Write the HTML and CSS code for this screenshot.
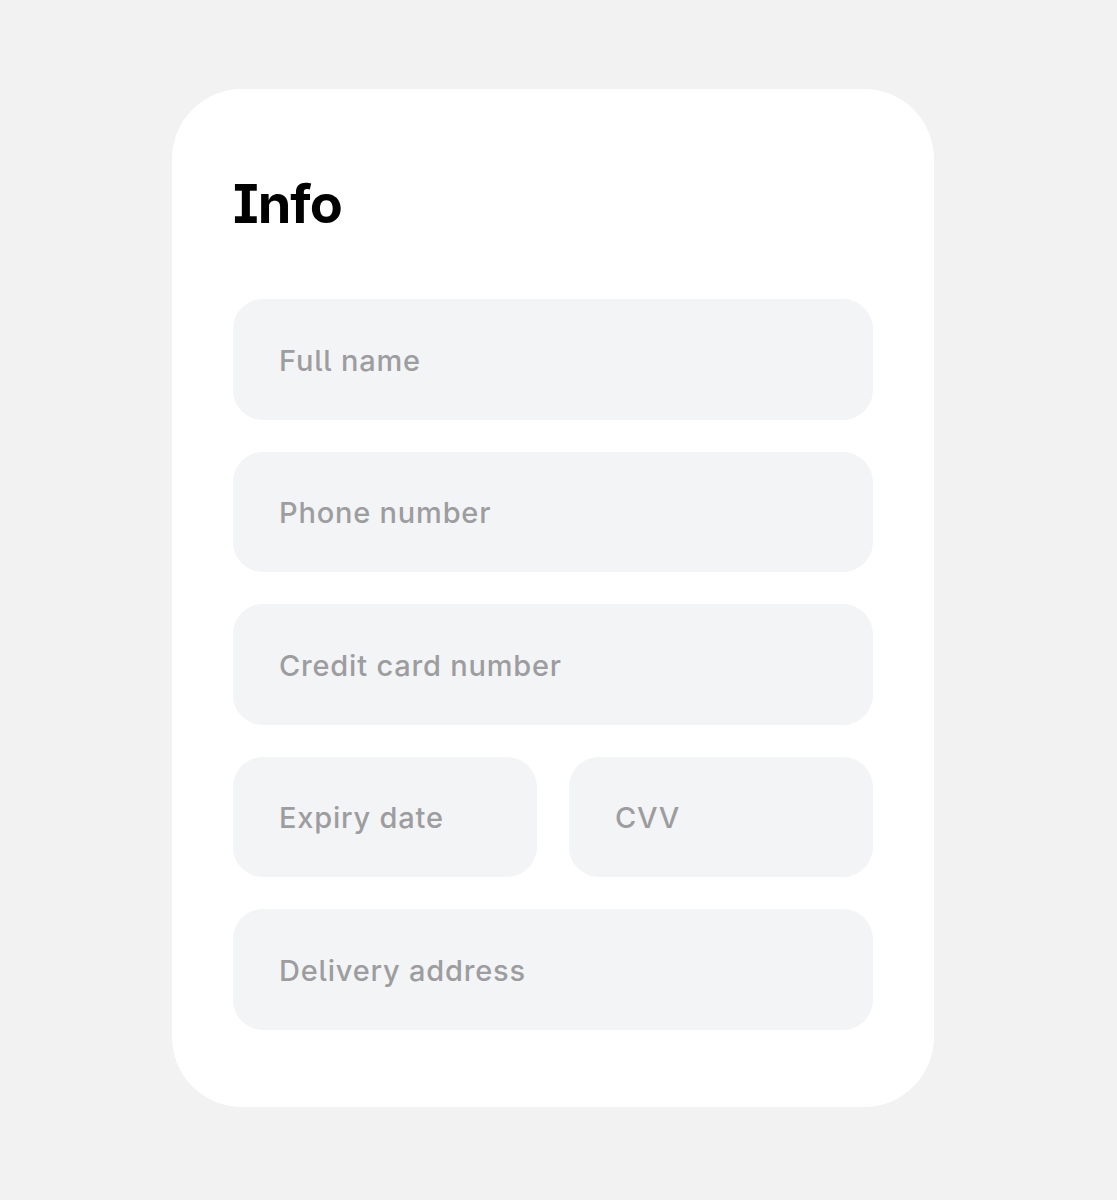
FILE: index.html
```html
<!DOCTYPE html>
<html lang="en">
<head>
<meta charset="utf-8">
<title>Info</title>
<link rel="stylesheet" href="styles.css">
</head>
<body>
<main class="card">
  <h1 class="title">Info</h1>
  <form class="form">
    <div class="field"><span class="placeholder">Full name</span></div>
    <div class="field"><span class="placeholder">Phone number</span></div>
    <div class="field"><span class="placeholder">Credit card number</span></div>
    <div class="row">
      <div class="field"><span class="placeholder">Expiry date</span></div>
      <div class="field"><span class="placeholder">CVV</span></div>
    </div>
    <div class="field"><span class="placeholder">Delivery address</span></div>
  </form>
</main>
</body>
</html>
```
FILE: styles.css
```css
html, body {
  margin: 0;
  padding: 0;
}
body {
  background: #f2f2f2;
  font-family: Inter, "Noto Sans", sans-serif;
  font-feature-settings: "cv05" 1, "cv08" 1;
  min-height: 1200px;
  padding-top: 89px;
  box-sizing: border-box;
}
.card {
  margin-left: 172px;
  width: 762px;
  box-sizing: border-box;
  background: #ffffff;
  border-radius: 70px;
  padding: 88px 61px 77px;
}
.title {
  margin: 0 0 68px;
  font-size: 54px;
  line-height: 1;
  font-weight: 700;
  color: #000;
  letter-spacing: -1px;
}
.form {
  display: flex;
  flex-direction: column;
  gap: 32px;
  margin: 0;
}
.row {
  display: grid;
  grid-template-columns: 1fr 1fr;
  gap: 32px;
}
.field {
  height: 120.5px;
  background: #f3f4f6;
  border-radius: 30px;
  display: flex;
  align-items: center;
  padding-left: 46px;
  padding-top: 2px;
  box-sizing: border-box;
}
.placeholder {
  font-size: 29px;
  font-weight: 500;
  color: #9d9d9f;
  letter-spacing: 0.8px;
}
```
